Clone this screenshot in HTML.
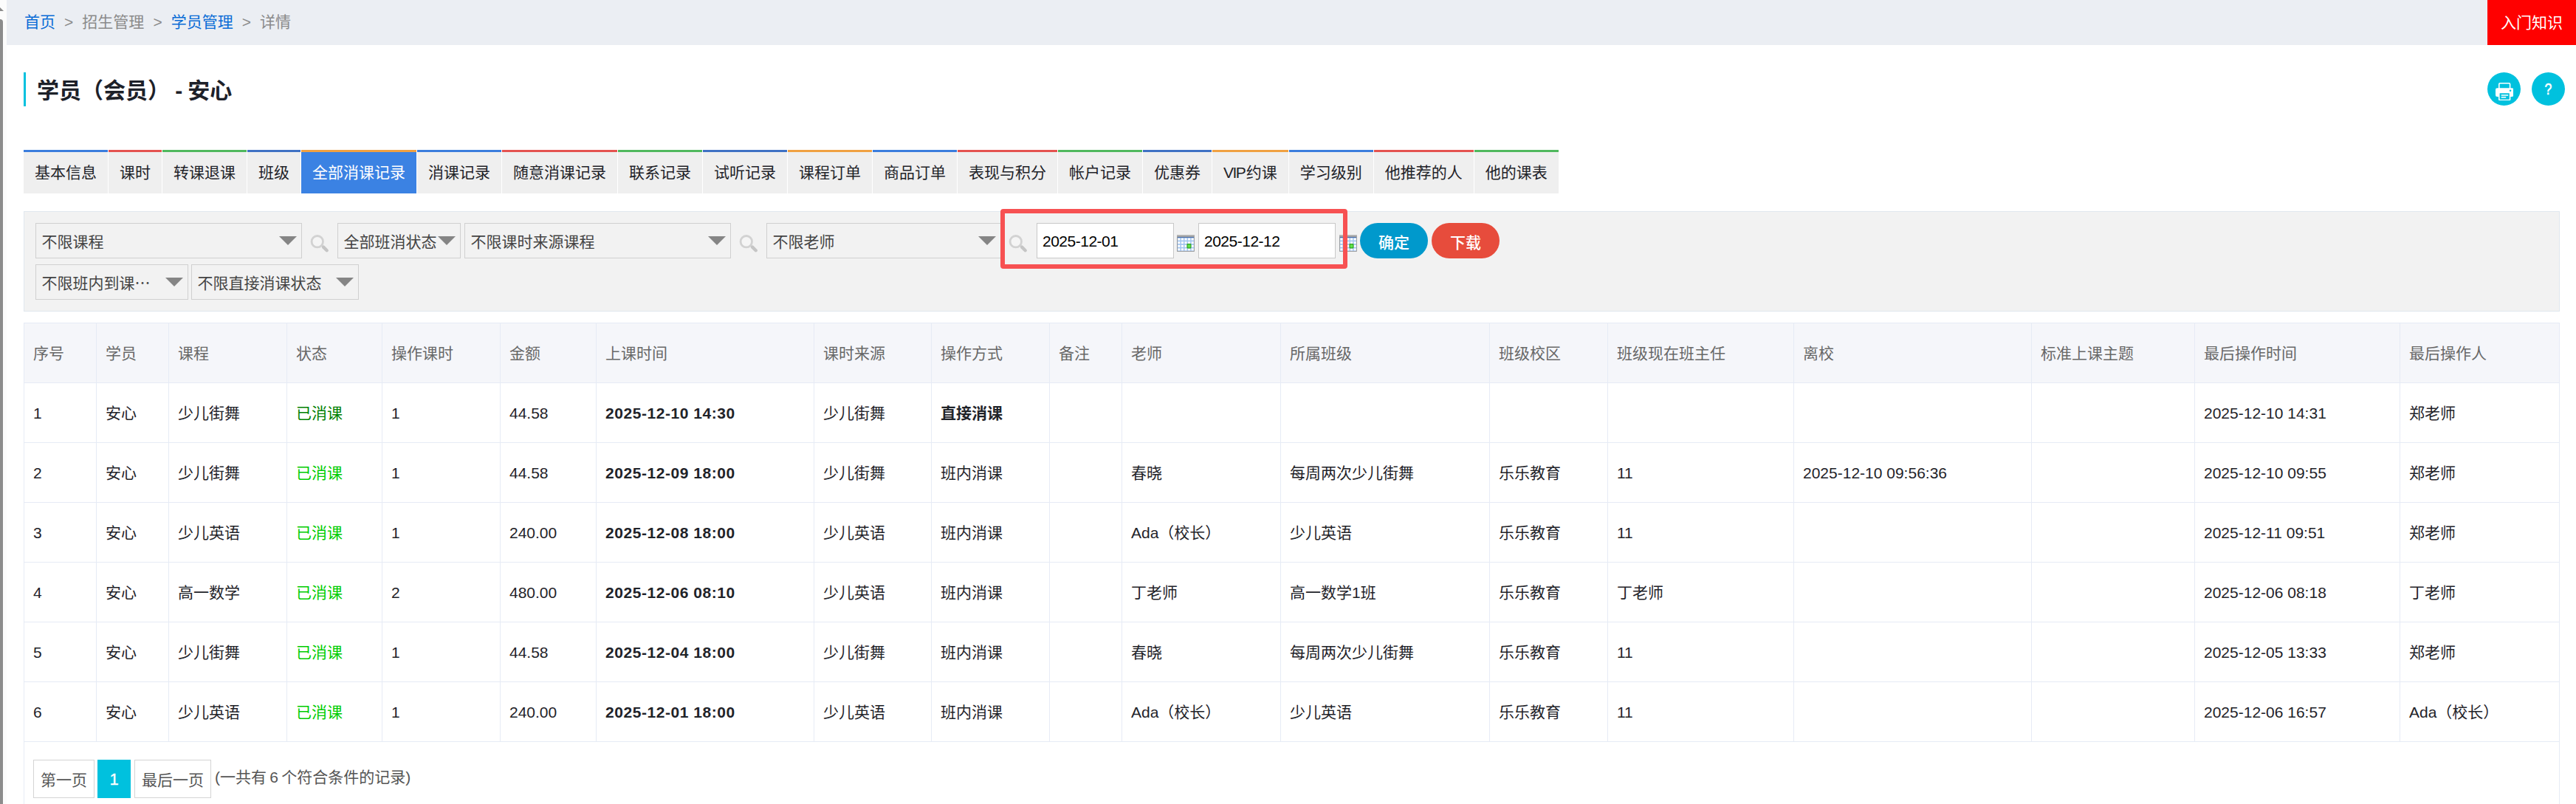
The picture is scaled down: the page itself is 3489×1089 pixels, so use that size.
<!DOCTYPE html>
<html lang="zh-CN">
<head>
<meta charset="utf-8">
<title>学员（会员） - 安心</title>
<style>
*{box-sizing:border-box;margin:0;padding:0}
html,body{width:3489px;height:1089px;overflow:hidden;background:#fff}
body{font-family:"Liberation Sans","Noto Sans CJK SC",sans-serif;font-size:21px;color:#1f2329;position:relative}
.abs{position:absolute}
/* left scrollbar strip */
#sb{left:0;top:0;width:9px;height:1089px;background:#fcfcfc}
#sb .thumb{position:absolute;left:0;top:26px;width:4px;height:1070px;background:#8c8c8c;border-top-right-radius:5px}
#sb .arr{position:absolute;left:0;top:10px;width:0;height:0;border-left:0 solid transparent;border-right:5px solid transparent;border-bottom:5px solid #8c8c8c}
/* breadcrumb */
#bc{left:9px;top:0;width:3480px;height:61px;background:#ebeef3;line-height:60px;padding-left:24px;color:#8a8a8a;white-space:nowrap}
#bc a{color:#0a6cd6;text-decoration:none}
#bc .sep{margin:0 12.05px}
#know{left:3369px;top:0;width:120px;height:61px;background:#ff0000;color:#fff;text-align:center;line-height:61px;font-size:21px}
/* title */
#tbar{left:32px;top:98px;width:3px;height:46px;background:#00c1de}
#title{left:50px;top:100px;height:46px;line-height:46px;font-size:30px;font-weight:bold;color:#1d2129;white-space:nowrap;word-spacing:-1.2px}
.circ{width:45px;height:45px;border-radius:50%;background:#00c1de;top:98px}
/* tabs */
#tabs{left:32px;top:203px;height:59px;white-space:nowrap;display:flex}
#tabs div{height:59px;border-top:3px solid #3b7ddd;background:#efefef;padding:0 15px;line-height:56px;margin-right:1px;color:#1f2329;font-size:21px}
#tabs .r{border-top-color:#e45350}
#tabs .g{border-top-color:#50b85e}
#tabs .b2{border-top-color:#3f72c4}
#tabs .o{border-top-color:#f0a142}
#tabs .sel{background:#3b82e3;color:#fff}
/* filter */
#flt{left:32px;top:286px;width:3434.5px;height:136px;background:#f2f2f2;border:1px solid #e0e7ee}
.sel2{position:absolute;height:48px;border:1px solid #d0d0d0;background:#f2f2f2;line-height:49.5px;padding-left:7.5px;font-size:21px;color:#444;white-space:nowrap;overflow:hidden}
.sel2 i{position:absolute;right:6px;top:17px;width:0;height:0;border-left:12px solid transparent;border-right:12px solid transparent;border-top:12px solid #858585}
.inp{position:absolute;height:48px;border:1px solid #c8c8c8;background:#fff;line-height:48px;padding-left:7px;font-size:21px;color:#000;white-space:nowrap;letter-spacing:-.5px}
.pill{position:absolute;height:48px;width:92px;border-radius:24px;color:#fff;text-align:center;line-height:53px;font-size:21px;font-weight:500}
#redbox{left:1354.6px;top:283.2px;width:470.3px;height:80.9px;border:6.1px solid #f75152;border-radius:4px}
/* table */
#tb{left:32px;top:437px;border-collapse:collapse;table-layout:fixed;width:3434px}
#tb th,#tb td{border:1px solid #e6ebf5;height:81px;line-height:30px;padding:1px 12px 0 12px;text-align:left;font-weight:normal;font-size:21px;white-space:nowrap;overflow:hidden;vertical-align:middle}
#tb th{background:#f5f6fa;color:#686868}
#tb td{color:#1f2329}
#tb td.g1{color:#008000}
#tb td.g2{color:#00cc00}
#tb td b{font-weight:bold}
#tb td b.d{letter-spacing:.55px}
#tleft{left:32px;top:1004px;width:1px;height:85px;background:#e6ebf5}
#tright{left:3465.5px;top:1004px;width:1px;height:85px;background:#e6ebf5}
/* pagination */
.pg{position:absolute;top:1029px;height:52px;border:1px solid #d4d4d4;background:#fff;color:#555;text-align:center;line-height:54px;font-size:21px}
.pg.cur{background:#00c1de;border-color:#00c1de;color:#fff;font-size:22px;line-height:52px;-webkit-text-stroke:.35px #fff}
#pgt{left:291px;top:1029px;height:52px;line-height:48px;font-size:21px;color:#555;white-space:nowrap;word-spacing:-1.5px}
</style>
</head>
<body>
<div id="sb" class="abs"><div class="arr"></div><div class="thumb"></div></div>
<div id="bc" class="abs"><a>首页</a><span class="sep">&gt;</span>招生管理<span class="sep">&gt;</span><a>学员管理</a><span class="sep">&gt;</span>详情</div>
<div id="know" class="abs">入门知识</div>
<div id="tbar" class="abs"></div>
<div id="title" class="abs">学员（会员） - 安心</div>
<div class="abs circ" style="left:3369px"><svg style="position:absolute;left:10.8px;top:14.1px" width="24.4" height="24.4" viewBox="0 0 24.4 24.4"><rect x="4.8" y="0.8" width="14.8" height="8" rx="1.2" fill="#00c1de" stroke="#fff" stroke-width="1.6"/><rect x="0" y="7.3" width="24.4" height="11.6" rx="2.2" fill="#fff"/><rect x="4.8" y="13.4" width="14.8" height="10.2" rx="1.2" fill="#00c1de" stroke="#fff" stroke-width="1.6"/><path d="M7.7 16.9H17.2M7.7 19.7H14.2" stroke="#fff" stroke-width="1.5" fill="none"/><circle cx="20.1" cy="10.75" r="1.25" fill="#00c1de"/></svg></div>
<div class="abs circ" style="left:3429px"><span style="position:absolute;left:0;top:0;width:45px;text-align:center;line-height:46px;font-size:22px;font-weight:normal;-webkit-text-stroke:0.6px #fff;color:#fff;transform:scaleX(.8)">?</span></div>
<div id="tabs" class="abs"><div>基本信息</div><div class="r">课时</div><div class="g">转课退课</div><div class="b2">班级</div><div class="o sel">全部消课记录</div><div>消课记录</div><div class="r">随意消课记录</div><div class="g">联系记录</div><div class="b2">试听记录</div><div class="o">课程订单</div><div>商品订单</div><div class="r">表现与积分</div><div class="g">帐户记录</div><div class="b2">优惠券</div><div class="o"><span style="letter-spacing:-1.6px">VI</span>P约课</div><div>学习级别</div><div class="r">他推荐的人</div><div class="g">他的课表</div></div>
<div id="flt" class="abs"></div>
<div class="sel2" style="left:48px;top:302px;width:361px">不限课程<i></i></div>
<div class="sel2" style="left:457px;top:302px;width:167px">全部班消状态<i></i></div>
<div class="sel2" style="left:629px;top:302px;width:361px">不限课时来源课程<i></i></div>
<div class="sel2" style="left:1038px;top:302px;width:318px">不限老师<i></i></div>
<div class="sel2" style="left:48px;top:358px;width:207px">不限班内到课<span style="font-family:'Noto Sans CJK SC',sans-serif;line-height:0">…</span><i></i></div>
<div class="sel2" style="left:259px;top:358px;width:227px">不限直接消课状态<i></i></div>
<svg class="abs mag" style="left:420px;top:316px" width="28" height="28" viewBox="0 0 28 28"><circle cx="9.8" cy="11.2" r="7.7" fill="#f5f5f5" stroke="#d2d2d2" stroke-width="2.8"/><path d="M18 18.6 L22.7 23.2" stroke="#c5c5c5" stroke-width="4.4" stroke-linecap="round"/></svg>
<svg class="abs mag" style="left:1001px;top:316px" width="28" height="28" viewBox="0 0 28 28"><circle cx="9.8" cy="11.2" r="7.7" fill="#f5f5f5" stroke="#d2d2d2" stroke-width="2.8"/><path d="M18 18.6 L22.7 23.2" stroke="#c5c5c5" stroke-width="4.4" stroke-linecap="round"/></svg>
<svg class="abs mag" style="left:1366px;top:316px" width="28" height="28" viewBox="0 0 28 28"><circle cx="9.8" cy="11.2" r="7.7" fill="#f5f5f5" stroke="#d2d2d2" stroke-width="2.8"/><path d="M18 18.6 L22.7 23.2" stroke="#c5c5c5" stroke-width="4.4" stroke-linecap="round"/></svg>
<div class="inp" style="left:1404px;top:302px;width:186px">2025-12-01</div>
<svg class="abs cal" style="left:1594px;top:318px" width="24" height="23" viewBox="0 0 24 23"><rect x="0.1" y="0.2" width="23.7" height="22.6" fill="#8e8e8e"/><rect x="0.9" y="4" width="22.1" height="17.9" fill="#a3c6f1"/><rect x="0.1" y="0.2" width="23.7" height="1.4" fill="#c4c4c4"/><rect x="0.1" y="1.6" width="23.7" height="1.3" fill="#a6a6a6"/><rect x="0.9" y="2.9" width="22.1" height="1.2" fill="#4f72ab"/><g fill="#fff"><rect x="1.33" y="4.63" width="3.05" height="2.9"/><rect x="5.91" y="4.63" width="3.05" height="2.9"/><rect x="10.49" y="4.63" width="3.05" height="2.9"/><rect x="15.07" y="4.63" width="3.05" height="2.9"/><rect x="19.65" y="4.63" width="3.05" height="2.9"/><rect x="1.33" y="9.23" width="3.05" height="2.9"/><rect x="5.91" y="9.23" width="3.05" height="2.9"/><rect x="10.49" y="9.23" width="3.05" height="2.9"/><rect x="15.07" y="9.23" width="3.05" height="2.9"/><rect x="19.65" y="9.23" width="3.05" height="2.9"/><rect x="1.33" y="13.83" width="3.05" height="2.9"/><rect x="5.91" y="13.83" width="3.05" height="2.9"/><rect x="10.49" y="13.83" width="3.05" height="2.9"/><rect x="15.07" y="13.83" width="3.05" height="2.9"/><rect x="19.65" y="13.83" width="3.05" height="2.9"/><rect x="1.33" y="18.43" width="3.05" height="2.9"/><rect x="5.91" y="18.43" width="3.05" height="2.9"/><rect x="10.49" y="18.43" width="3.05" height="2.9"/><rect x="15.07" y="18.43" width="3.05" height="2.9"/><rect x="19.65" y="18.43" width="3.05" height="2.9"/></g><rect x="13.5" y="12.1" width="5.95" height="6.3" rx="0.8" fill="#2f9e1f"/><rect x="14.6" y="13.2" width="3.8" height="4.1" fill="#5fe34c"/></svg>
<div class="inp" style="left:1623px;top:302px;width:186px">2025-12-12</div>
<svg class="abs cal" style="left:1814px;top:318px" width="24" height="23" viewBox="0 0 24 23"><rect x="0.1" y="0.2" width="23.7" height="22.6" fill="#8e8e8e"/><rect x="0.9" y="4" width="22.1" height="17.9" fill="#a3c6f1"/><rect x="0.1" y="0.2" width="23.7" height="1.4" fill="#c4c4c4"/><rect x="0.1" y="1.6" width="23.7" height="1.3" fill="#a6a6a6"/><rect x="0.9" y="2.9" width="22.1" height="1.2" fill="#4f72ab"/><g fill="#fff"><rect x="1.33" y="4.63" width="3.05" height="2.9"/><rect x="5.91" y="4.63" width="3.05" height="2.9"/><rect x="10.49" y="4.63" width="3.05" height="2.9"/><rect x="15.07" y="4.63" width="3.05" height="2.9"/><rect x="19.65" y="4.63" width="3.05" height="2.9"/><rect x="1.33" y="9.23" width="3.05" height="2.9"/><rect x="5.91" y="9.23" width="3.05" height="2.9"/><rect x="10.49" y="9.23" width="3.05" height="2.9"/><rect x="15.07" y="9.23" width="3.05" height="2.9"/><rect x="19.65" y="9.23" width="3.05" height="2.9"/><rect x="1.33" y="13.83" width="3.05" height="2.9"/><rect x="5.91" y="13.83" width="3.05" height="2.9"/><rect x="10.49" y="13.83" width="3.05" height="2.9"/><rect x="15.07" y="13.83" width="3.05" height="2.9"/><rect x="19.65" y="13.83" width="3.05" height="2.9"/><rect x="1.33" y="18.43" width="3.05" height="2.9"/><rect x="5.91" y="18.43" width="3.05" height="2.9"/><rect x="10.49" y="18.43" width="3.05" height="2.9"/><rect x="15.07" y="18.43" width="3.05" height="2.9"/><rect x="19.65" y="18.43" width="3.05" height="2.9"/></g><rect x="13.5" y="12.1" width="5.95" height="6.3" rx="0.8" fill="#2f9e1f"/><rect x="14.6" y="13.2" width="3.8" height="4.1" fill="#5fe34c"/></svg>
<div id="redbox" class="abs"></div>
<div class="pill" style="left:1842px;top:302px;background:#0099cc">确定</div>
<div class="pill" style="left:1939px;top:302px;background:#e74c3c">下载</div>

<table id="tb" class="abs"><colgroup><col style="width:98px"><col style="width:98px"><col style="width:160px"><col style="width:129px"><col style="width:160px"><col style="width:130px"><col style="width:295px"><col style="width:159px"><col style="width:160px"><col style="width:98px"><col style="width:215px"><col style="width:283px"><col style="width:160px"><col style="width:252px"><col style="width:322px"><col style="width:221px"><col style="width:278px"><col style="width:216px"></colgroup>
<tr><th>序号</th><th>学员</th><th>课程</th><th>状态</th><th>操作课时</th><th>金额</th><th>上课时间</th><th>课时来源</th><th>操作方式</th><th>备注</th><th>老师</th><th>所属班级</th><th>班级校区</th><th>班级现在班主任</th><th>离校</th><th>标准上课主题</th><th>最后操作时间</th><th>最后操作人</th></tr>
<tr><td>1</td><td>安心</td><td>少儿街舞</td><td class="g1">已消课</td><td>1</td><td>44.58</td><td><b class="d">2025-12-10 14:30</b></td><td>少儿街舞</td><td><b>直接消课</b></td><td></td><td></td><td></td><td></td><td></td><td></td><td></td><td>2025-12-10 14:31</td><td>郑老师</td></tr>
<tr><td>2</td><td>安心</td><td>少儿街舞</td><td class="g2">已消课</td><td>1</td><td>44.58</td><td><b class="d">2025-12-09 18:00</b></td><td>少儿街舞</td><td>班内消课</td><td></td><td>春晓</td><td>每周两次少儿街舞</td><td>乐乐教育</td><td>11</td><td>2025-12-10 09:56:36</td><td></td><td>2025-12-10 09:55</td><td>郑老师</td></tr>
<tr><td>3</td><td>安心</td><td>少儿英语</td><td class="g2">已消课</td><td>1</td><td>240.00</td><td><b class="d">2025-12-08 18:00</b></td><td>少儿英语</td><td>班内消课</td><td></td><td>Ada（校长）</td><td>少儿英语</td><td>乐乐教育</td><td>11</td><td></td><td></td><td>2025-12-11 09:51</td><td>郑老师</td></tr>
<tr><td>4</td><td>安心</td><td>高一数学</td><td class="g2">已消课</td><td>2</td><td>480.00</td><td><b class="d">2025-12-06 08:10</b></td><td>少儿英语</td><td>班内消课</td><td></td><td>丁老师</td><td>高一数学1班</td><td>乐乐教育</td><td>丁老师</td><td></td><td></td><td>2025-12-06 08:18</td><td>丁老师</td></tr>
<tr><td>5</td><td>安心</td><td>少儿街舞</td><td class="g2">已消课</td><td>1</td><td>44.58</td><td><b class="d">2025-12-04 18:00</b></td><td>少儿街舞</td><td>班内消课</td><td></td><td>春晓</td><td>每周两次少儿街舞</td><td>乐乐教育</td><td>11</td><td></td><td></td><td>2025-12-05 13:33</td><td>郑老师</td></tr>
<tr><td>6</td><td>安心</td><td>少儿英语</td><td class="g2">已消课</td><td>1</td><td>240.00</td><td><b class="d">2025-12-01 18:00</b></td><td>少儿英语</td><td>班内消课</td><td></td><td>Ada（校长）</td><td>少儿英语</td><td>乐乐教育</td><td>11</td><td></td><td></td><td>2025-12-06 16:57</td><td>Ada（校长）</td></tr>
</table>
<div id="tleft" class="abs"></div><div id="tright" class="abs"></div>

<div class="pg" style="left:45px;width:83px">第一页</div>
<div class="pg cur" style="left:132px;width:45px">1</div>
<div class="pg" style="left:182px;width:104px">最后一页</div>
<div id="pgt" class="abs">(一共有 6 个符合条件的记录)</div>

</body>
</html>
